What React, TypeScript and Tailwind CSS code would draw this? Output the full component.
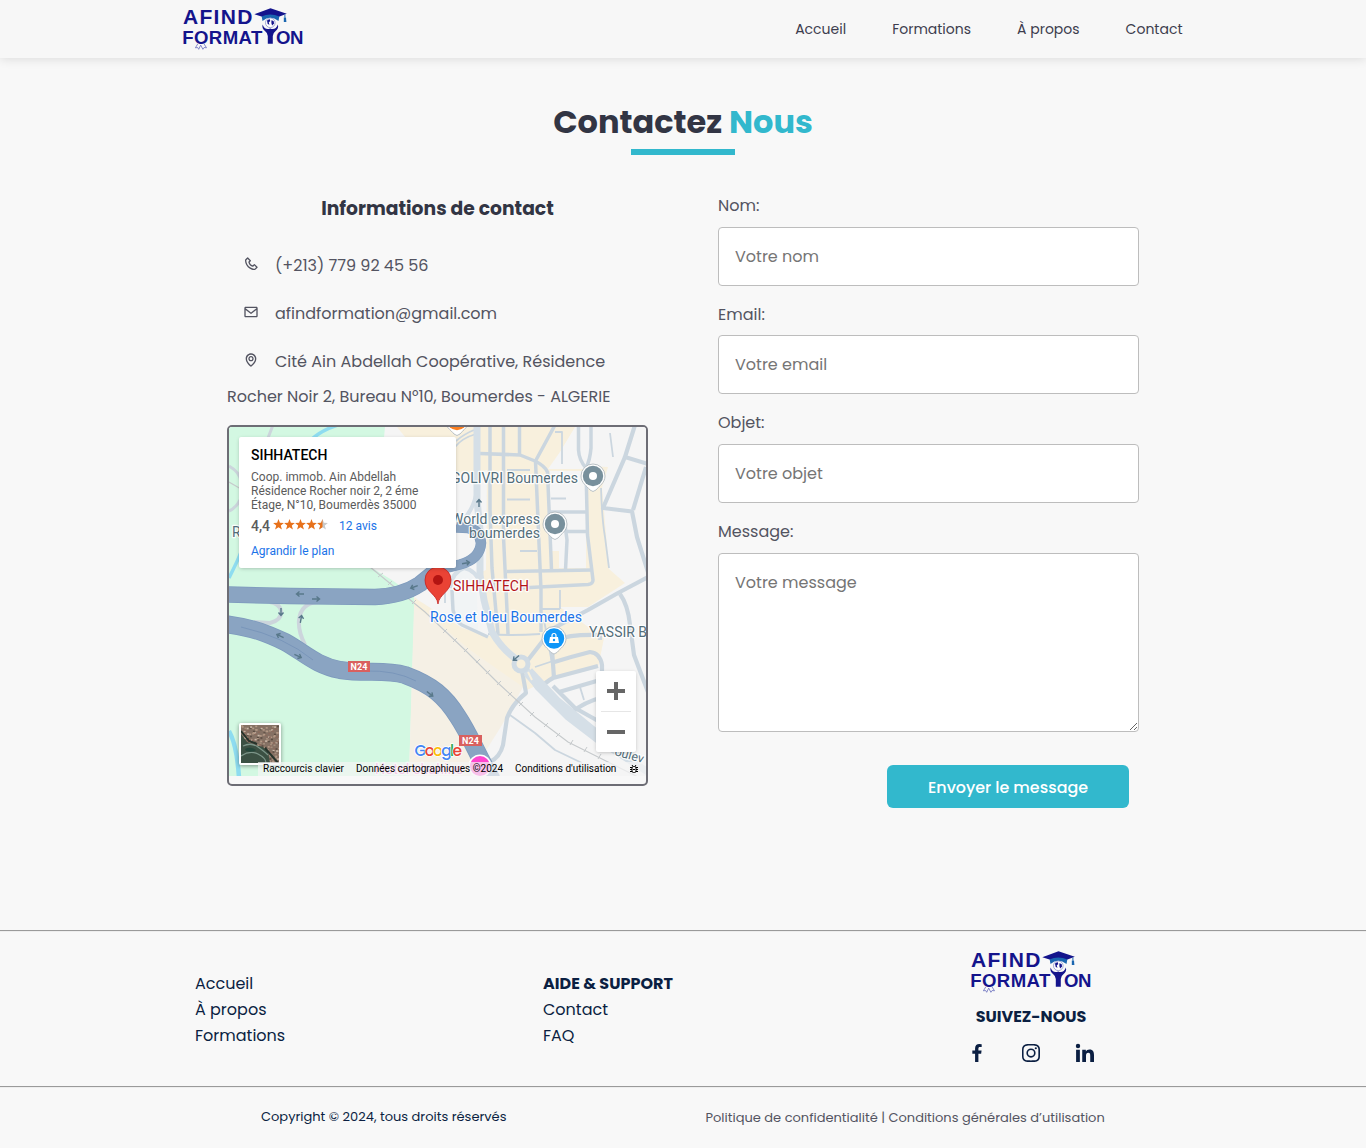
import React from "react";
import {
  BiPhone,
  BiEnvelope,
  BiMap,
  BiLogoFacebook,
  BiLogoInstagram,
  BiLogoLinkedin,
} from "react-icons/bi";

function Logo() {
  return (
    <svg className="overflow-visible" width="122" height="44" viewBox="182 7 122 44" fontFamily="Liberation Sans" fontWeight="700" fill="#14148c">
      <text x="183" y="23.5" fontSize="21" letterSpacing="1.300">AFIND</text>
      <text x="182.3" y="43.8" fontSize="18.6" textLength="80">FORMAT</text>
      <text x="276" y="43.8" fontSize="18.6" textLength="27.5">ON</text>
      <path d="M261.5 15.5Q270 11.5 279.5 15.5L278.5 21Q270 14.5 262.5 21Z" fill="#1a66b0" />
      <path d="M254.3 14.3L270.5 8.2L286.8 13.8L279.5 16.6Q270 12.6 261.5 16.6Z" />
      <path d="M284.9 14.5v3" stroke="#1a66b0" strokeWidth="1" />
      <path d="M283.8 17.5h2.2l.4 4.6h-2.6z" fill="#1a66b0" />
      <circle cx="270.3" cy="22.8" r="4.8" fill="#fff" stroke="#7d86c8" strokeWidth=".7" />
      <path d="M267 20.5l2.5-1.5.8 2-1.6 1.4.8 2.4-1.8-.8zM271.4 20.2l2.2.8.5 2.4-2 2.2-.7-2.4z" />
      <path d="M262.6 24.6Q264.8 30.6 270.2 28.6Q275.6 30.6 277.9 24.6Q279 28.6 275.4 31.2Q272.8 33 272.8 36V43.8H267.8V36Q267.8 33 265.2 31.2Q261.6 28.6 262.6 24.6Z" />
      <path d="M197.8 43.8l-2.4 4 2.3-.3 1 1.8 2-4.2 2.2 4.2 1.2-1.8 2.4.3-2.5-4" fill="none" stroke="#6a6fbe" strokeWidth=".8" />
    </svg>
  );
}

const STREET = "#cbd6df";

const thinStreets = [
  "M555 432H562V464",
  "M610 433L613 457",
  "M601 488Q602 520 605 537L609 568",
  "M507 470H530M507 499.500H530M520 551H537M551 498.500H566",
  "M455 447Q462 438 476 434M456 441Q464 434 474 430",
  "M510 715L535 733L555 750L582 763",
  "M560 590V609M541 609H560",
  "M488 634Q510 636 540 634",
  "M544 620L552 663",
  "M580 687L584 700M535 667L553 661",
  "M445 603V590",
];

const midStreets = [
  "M490 425V510L492 568L498 634",
  "M503.500 425V537L507 610L508 634",
  "M480 453.500L520 455L535 461Q545 466 547.500 472L549.500 520L551.500 570",
  "M519.500 425V455",
  "M555 425L535.500 461L538 520L541 590V632",
  "M578.500 425V450Q579 460 586 468L587.500 535L593 580Q593 584 588 584.500L520 588",
  "M591 425V448Q590 460 586 468",
  "M507 571.500L592 570",
  "M549 512H587M566 531.500H587",
  "M565 525L567 540L565.500 570",
  "M452 590L453 610Q456 622 462 625L488 637",
];

const wideStreets = [
  "M635 425L625 457L648 464",
  "M625 457L603 508L632 511.500L637 537L648 572",
  "M646 467L633 510",
  "M648 577L618 593L588 610L552 629L528 660",
  "M620 594Q628 605 630 625L634 655L648 692",
  "M556 640Q570 634 600 635V640",
  "M551 663Q570 657 590 652Q600 653 602 665V675M552 650L554 678",
  "M538 691Q545 682 553 678L598 666",
  "M559 692L600 680M572 712Q585 702 600 698M553 686L575 708L600 722",
  "M521 665L526 693Q512 704 507 718L503 745Q500 757 490 762",
];

const LOWER_ROAD =
  "M225 624C255 628 268 634 285 642C305 653 315 665 340 670C365 674 385 669 405 675C432 685 445 696 458 717C470 735 475 750 492 780";
const UPPER_ROAD = "M227 594.500L290 596L375 597Q402 596 420 584L436 571L446 568";
const LOOP_ROAD = "M434 571L460 564.500Q480 559 481 543Q480 530 468 528L448 527";

function Arrow({ x, y, r }: { x: number; y: number; r: number }) {
  return (
    <path
      transform={`translate(${x} ${y}) rotate(${r})`}
      d="M-4 0H3M.5-2.500L3.500 0L.5 2.500"
      fill="none"
      stroke="#58788a"
      strokeWidth="1.4"
    />
  );
}

function Pin({ x, y, color }: { x: number; y: number; color: string }) {
  return (
    <g transform={`translate(${x} ${y})`}>
      <path
        d="M0-12A12 12 0 0 1 12 0C12 7 6 10 3 14Q0 17 -3 14C-6 10 -12 7 -12 0A12 12 0 0 1 0-12Z"
        fill="#fff"
        stroke="#aab3b8"
        strokeWidth=".8"
      />
      <circle r="10.200" fill={color} />
    </g>
  );
}

function MapDrawing() {
  return (
    <svg className="block" width="417" height="349" viewBox="229 427 417 349" fontFamily="Roboto">
      <rect x="229" y="427" width="417" height="349" fill="#f5f5f5" />
      <path d="M229 427H385L372 568L392 580L414 596V620L409 776H229Z" fill="#d3f8e2" />
      <path d="M397 427H575L560 452L548 469H586V466L608 467L602 487L609 569L625 583L588 607H560L604 638L598 668L548 680L527 690L515 683L452 640L414 606V598L440 590L486 570L487 470L440 480Z" fill="#f8f0dd" />
      <path d="M550 471H586V568H559V551H550Z" fill="#f5f5f5" />
      <path d="M414 606L455 625L523 687L502 725L470 776H409Z" fill="#f5f0e5" />
      <path d="M414 606L436 621L470 650L523 687L528 650L487 606Z" fill="#f8f0dd" />
      <path d="M414 596L440 572L450 569H482L490 636L462 628L440 614L418 600Z" fill="#f5f5f5" />
      <path d="M448 592Q450 572 463 570Q476 572 477 595L478 630L462 625L452 610Z" fill="#f1f4f5" />
      <g fill="none" stroke={STREET} strokeLinejoin="round">
        <g strokeWidth="1.8">{thinStreets.map((d) => <path key={d} d={d} />)}</g>
        <g strokeWidth="3.5">{midStreets.map((d) => <path key={d} d={d} />)}</g>
        <g strokeWidth="4.200">{wideStreets.map((d) => <path key={d} d={d} />)}</g>
      </g>
      <path d="M477 425V500L480 530L480 575L484 600L492 632Q500 646 511 655L522 664L538 687L568 717L598 740L648 772" fill="none" stroke="#d5dfe7" strokeWidth="7" strokeLinejoin="round" />
      <path d="M477 490Q474 510 460 524M450 588Q452 572 464 568Q476 570 482 586" fill="none" stroke="#d5dfe7" strokeWidth="4" />
      <path d="M528 672L556 702L600 738" fill="none" stroke="#d5dfe7" strokeWidth="11" />
      <circle cx="521" cy="664" r="7" fill="#f8f0dd" stroke="#d0dbe4" strokeWidth="5" />
      <path d="M528 672L532 680" stroke="#f8f0dd" strokeWidth="2" />
      <g fill="none" stroke="#8edcf0" strokeWidth="3.5">
        <path d="M338 425Q322 430 312 439" />
        <path d="M229 578Q238 560 241 552" />
        <path d="M229 731Q237 745 239 778" strokeWidth="4.500" />
      </g>
      <path d="M229 466Q240 472 241 482M229 511Q236 508 240 500M273 425L268 438" fill="none" stroke="#ccd5dc" strokeWidth="3" />
      <path d="M370 567L425 612L465 650L498 683L535 717L568 742L612 764L640 778M229 482L241 489" fill="none" stroke="#c6cacc" strokeWidth="1.1" />
      <path d="M378 577l5-4M388 585l4-4M400 595l4-4M412 604l4-4M443 633l4-4M453 642l4-4M464 652l4-4M476 663l4-4M486 674l4-4M497 685l4-4M508 696l4-4M519 706l4-4M530 716l4-4M544 727l4-4M556 737l4-4M570 745l3-5M584 752l3-5M598 759l3-5" stroke="#c6cacc" strokeWidth="1" />

      <path d="M254 622L270 623Q282 620 281 611Q280 604 270 602M305 645Q298 631 299 620Q301 603 318 602H350" fill="none" stroke="#ccd5dc" strokeWidth="4" />
      <g fill="none" strokeLinejoin="round">
        <path d={LOOP_ROAD} stroke="#7d9abd" strokeWidth="10.500" />
        <path d={UPPER_ROAD} stroke="#7d9abd" strokeWidth="16.500" />
        <path d={UPPER_ROAD} stroke="#8aa4c2" strokeWidth="15" />
        <path d={LOOP_ROAD} stroke="#8aa4c2" strokeWidth="9.500" />
        <path d={LOWER_ROAD} stroke="#7d9abd" strokeWidth="18" />
        <path d={LOWER_ROAD} stroke="#8aa4c2" strokeWidth="16.500" />
        <path d="M241 627Q285 637 313 660M365 671Q395 670 416 681" stroke="#7592b8" strokeWidth=".8" />
      </g>
      <Arrow x={300} y={594} r={180} />
      <Arrow x={316} y={599} r={0} />
      <Arrow x={414} y={587} r={160} />
      <Arrow x={466} y={563} r={-10} />
      <Arrow x={281} y={612} r={90} />
      <Arrow x={301} y={619} r={-80} />
      <Arrow x={280} y={636} r={205} />
      <Arrow x={298} y={656} r={25} />
      <Arrow x={430} y={694} r={38} />
      <Arrow x={479} y={503} r={-90} />
      <Arrow x={516} y={658} r={140} />

      <g>
        <rect x="348" y="661" width="22" height="11" fill="#d9605f" />
        <rect x="459" y="735" width="23" height="11" fill="#d9605f" />
        <g fill="#fff" fontSize="9" fontWeight="700">
          <text x="350.500" y="670" textLength="17">N24</text>
          <text x="462" y="744" textLength="17">N24</text>
        </g>
      </g>

      <Pin x={457} y={420} color="#fb7f21" />
      <Pin x={593} y={476} color="#78909c" />
      <circle cx="593" cy="476" r="4" fill="#fff" />
      <Pin x={555} y={524} color="#78909c" />
      <circle cx="555" cy="524" r="4" fill="#fff" />
      <Pin x={554} y={638.5} color="#0e96f8" />
      <path d="M550 637H558L559 643H549Z" fill="#fff" />
      <path d="M552 637.500V635.500A2 2 0 0 1 556 635.500V637.500" fill="none" stroke="#fff" strokeWidth="1.2" />
      <circle cx="554" cy="640" r="1.200" fill="#0e96f8" />
      <circle cx="480" cy="766" r="11.500" fill="#fff" />
      <circle cx="480" cy="766" r="10" fill="#ff45cf" />

      <g fontSize="14" stroke="#fff" strokeWidth="2.500" strokeOpacity=".9" strokeLinejoin="round" style={{ paintOrder: "stroke" }}>
        <g fill="#546e7a">
          <text x="451" y="483" textLength="127">GOLIVRI Boumerdes</text>
          <text x="451" y="524" textLength="89">World express</text>
          <text x="469" y="538" textLength="71">boumerdes</text>
          <text x="589" y="637" textLength="58">YASSIR B</text>
          <text x="232" y="537">R</text>
          <text x="614" y="755" fontSize="12.500" transform="rotate(16 614 755)">oulev</text>
        </g>
        <text x="453" y="591" fill="#b3141a" textLength="76">SIHHATECH</text>
        <text x="430" y="622" fill="#1a73e8" textLength="152">Rose et bleu Boumerdes</text>
        <text x="375" y="774" fill="#f06bc9" textLength="88">Hotel chahine</text>
      </g>

      <path d="M438 604C437 594 425 592 425 580A13 13 0 0 1 451 580C451 592 439 594 438 604Z" fill="#ea4335" stroke="#c5221f" strokeWidth=".8" />
      <circle cx="438" cy="580" r="5" fill="#b31412" />

      <text x="414.500" y="755.500" fontFamily="Poppins" fontWeight="500" fontSize="15.500" textLength="47.500" strokeLinejoin="round" stroke="#fff" strokeWidth="1.500" style={{ paintOrder: "stroke" }}>
        <tspan fill="#4285f4">G</tspan>
        <tspan fill="#ea4335">o</tspan>
        <tspan fill="#fbbc04">o</tspan>
        <tspan fill="#4285f4">g</tspan>
        <tspan fill="#34a853">l</tspan>
        <tspan fill="#ea4335">e</tspan>
      </text>
    </svg>
  );
}

function SatelliteThumb() {
  const tiles = Array.from({ length: 190 }, (_, i) => ({
    x: (i * 7.3) % 38,
    y: (i * 11.9 + ((i * i) % 7)) % 38,
    c: ["#a58d7c", "#8b6a5c", "#cbb8a8", "#5b4d43", "#b59a86"][i % 5],
  }));
  return (
    <svg width="38" height="38" viewBox="0 0 38 38" className="block">
      <rect width="38" height="38" fill="#857164" />
      {tiles.map((t, i) => (
        <rect key={i} x={t.x} y={t.y} width="2" height="1.600" fill={t.c} />
      ))}
      <path d="M0 9L6 17L14 20L22 22L27 27L29 38H0Z" fill="#3b5043" />
      <path d="M2 21Q10 17 17 22T27 30M0 31Q9 25 17 29T25 38" fill="none" stroke="#7d968a" strokeWidth="1.300" />
      <path d="M4 24Q10 21 15 25Q12 28 5 26Z" fill="#24463a" />
      <path d="M0 6L8 16L16 19M24 23L37 38" fill="none" stroke="#26332b" strokeWidth="2" />
    </svg>
  );
}

function MapPanel() {
  return (
    <div className="relative h-[361px] w-[421px] overflow-hidden rounded-[5px] border-2 border-[#6d6d75] font-[Roboto]">
      <MapDrawing />

      <div className="absolute left-[10px] top-[10px] h-[131px] w-[217px] rounded-[2px] bg-white px-3 pt-[10px] shadow-[0_1px_4px_-1px_rgba(0,0,0,0.3)]">
        <div className="text-[14px] font-medium leading-4 text-black">SIHHATECH</div>
        <div className="mt-[7px] text-[12px] leading-[14px] text-[#5b5b5b]">
          <div>Coop. immob. Ain Abdellah</div>
          <div>Résidence Rocher noir 2, 2 éme</div>
          <div>Étage, N°10, Boumerdès 35000</div>
        </div>
        <div className="mt-[6px] flex h-4 items-center text-[12px] leading-4">
          <span className="mb-px w-[22px] text-[14px] font-medium text-[#5b5b5b]">4,4</span>
          <svg className="mb-[3px]" width="55" height="11" viewBox="0 0 55 11">
            {[0, 11, 22, 33, 44].map((x) => (
              <path key={x} transform={`translate(${x} 0)`} d="M5.500 0L6.900 3.800L10.900 4L7.800 6.500L8.900 10.400L5.500 8.200L2.100 10.400L3.200 6.500L.1 4L4.100 3.800Z" fill={x === 44 ? "#c9c9c9" : "#e7711b"} />
            ))}
            <path transform="translate(44 0)" d="M5.500 0V8.200L2.100 10.400L3.200 6.500L.1 4L4.100 3.800Z" fill="#e7711b" />
          </svg>
          <span className="ml-[11px] text-[#1a73e8]">12 avis</span>
        </div>
        <div className="mt-[9px] text-[12px] leading-4 text-[#1a73e8]">Agrandir le plan</div>
      </div>

      <div className="absolute left-[367px] top-[244px] flex h-[81px] w-10 flex-col items-center rounded-[2px] bg-white shadow-[0_1px_4px_-1px_rgba(0,0,0,0.3)]">
        <svg width="18" height="40" viewBox="0 0 18 40">
          <path d="M0 20H18M9 11V29" stroke="#666" strokeWidth="4" />
        </svg>
        <div className="h-px w-[30px] shrink-0 bg-[#e6e6e6]" />
        <svg width="18" height="40" viewBox="0 0 18 40">
          <path d="M0 20H18" stroke="#666" strokeWidth="4" />
        </svg>
      </div>

      <div className="absolute left-[10px] top-[296px] h-[42px] w-[42px] rounded-[2px] border-2 border-white shadow-[0_1px_4px_rgba(0,0,0,0.4)]">
        <SatelliteThumb />
      </div>

      <div className="absolute left-[29px] right-0 top-[335px] flex h-[14px] items-center bg-[#f5f5f5]/70 pl-[5px] text-[10px] leading-[14px] whitespace-nowrap text-black">
        <span className="w-[93px]">Raccourcis clavier</span>
        <span className="w-[159px]">Données cartographiques ©2024</span>
        <span className="w-[114px]">Conditions d'utilisation</span>
        <svg width="10" height="10" viewBox="0 0 10 10" fill="none" stroke="#000" strokeWidth="1">
          <rect x="3" y="2.500" width="4" height="6" rx="1.500" />
          <path d="M1 3.500H3M7 3.500H9M1 5.500H3M7 5.500H9M1 7.500H3M7 7.500H9M3 1L4 2.500M7 1L6 2.500M4 5.500H6" />
        </svg>
      </div>
    </div>
  );
}

const inputClass =
  "block w-full rounded-[4px] border border-[#bdbdbd] bg-white px-4 text-[16px] text-[#535461] placeholder:text-[#757575] outline-none";

export default function App() {
  return (
    <div className="flex h-[1148px] flex-col overflow-hidden bg-[#f8f8f8] font-['Poppins','Inter',sans-serif] text-[16px] text-[#535461]">
      <header className="flex h-[58px] shrink-0 items-start justify-between bg-[#f7f7f7] pl-[182px] pr-[183.5px] pt-[7px] shadow-[0_1px_10px_rgba(0,0,0,0.12)]">
        <Logo />
        <nav className="flex gap-[46px] pt-[11px] text-[14px] leading-[22px] text-[#3d3d4e]">
          <a>Accueil</a>
          <a>Formations</a>
          <a>À propos</a>
          <a>Contact</a>
        </nav>
      </header>

      <main className="flex h-[872px] shrink-0 flex-col items-center pt-[39px]">
        <h1 className="text-[32px] font-bold leading-[50px] text-[#323544]">
          Contactez <span className="text-[#32b8cd]">Nous</span>
        </h1>
        <div className="mt-[2px] h-[6px] w-[104px] bg-[#32b8cd]" />

        <div className="mt-[38px] flex gap-[70px]">
          <section className="w-[421px]">
            <h2 className="pt-[1px] text-center text-[18.72px] font-bold leading-[30px] text-[#323544]">
              Informations de contact
            </h2>
            <div className="mt-[24px] flex h-[35px] items-center pl-4">
              <BiPhone className="mb-[4px] size-4" />
              <span className="ml-4">(+213) 779 92 45 56</span>
            </div>
            <div className="mt-[13px] flex h-[35px] items-center pl-4">
              <BiEnvelope className="mb-[4px] size-4" />
              <span className="ml-4">afindformation@gmail.com</span>
            </div>
            <div className="mt-[13px] flex h-[35px] items-center pl-4">
              <BiMap className="mb-[4px] size-4" />
              <span className="ml-4 whitespace-nowrap">Cité Ain Abdellah Coopérative, Résidence</span>
            </div>
            <p className="mb-[11px] h-[35px] leading-[35px] whitespace-nowrap">Rocher Noir 2, Bureau N°10, Boumerdes - ALGERIE</p>
            <MapPanel />
          </section>

          <form className="w-[421px] leading-[26px]">
            <label className="mb-2 block h-[26px]">Nom:</label>
            <input className={`${inputClass} mb-4 h-[59px]`} placeholder="Votre nom" />
            <label className="mb-[7px] block h-[26px]">Email:</label>
            <input className={`${inputClass} mb-4 h-[59px]`} placeholder="Votre email" />
            <label className="mb-2 block h-[26px]">Objet:</label>
            <input className={`${inputClass} mb-4 h-[59px]`} placeholder="Votre objet" />
            <label className="mb-2 block h-[26px]">Message:</label>
            <textarea className={`${inputClass} h-[179px] resize pt-[16px]`} placeholder="Votre message" />
            <div className="flex justify-end pr-[10px] pt-[33px]">
              <button type="button" className="h-[43px] w-[242px] rounded-[6px] bg-[#32b8cd] pt-[2px] text-[15.9px] font-medium text-white">
                Envoyer le message
              </button>
            </div>
          </form>
        </div>
      </main>

      <footer className="text-[#0b1f42]">
        <div className="flex h-[157px] border-b border-t border-[#9a9a9a] pl-[195px] leading-[26px] shadow-[inset_0_1px_0_#eee,0_1px_0_#eee]">
          <ul className="w-[348px] pt-10">
            <li>Accueil</li>
            <li>À propos</li>
            <li>Formations</li>
          </ul>
          <ul className="w-[348px] pt-10">
            <li className="font-bold">AIDE &amp; SUPPORT</li>
            <li>Contact</li>
            <li>FAQ</li>
          </ul>
          <div className="flex w-[280px] flex-col items-center pt-[19px]">
            <Logo />
            <div className="mt-[10px] font-bold">SUIVEZ-NOUS</div>
            <div className="mt-[11px] flex gap-[30px] text-[24px]">
              <BiLogoFacebook />
              <BiLogoInstagram />
              <BiLogoLinkedin />
            </div>
          </div>
        </div>
        <div className="flex pl-[261px] pt-[20px] text-[13px] leading-5">
          <span className="w-[444.5px]">Copyright © 2024, tous droits réservés</span>
          <span className="pt-px whitespace-nowrap text-[#535461]">
            <a>Politique de confidentialité</a> | <a>Conditions générales d’utilisation</a>
          </span>
        </div>
      </footer>
    </div>
  );
}
